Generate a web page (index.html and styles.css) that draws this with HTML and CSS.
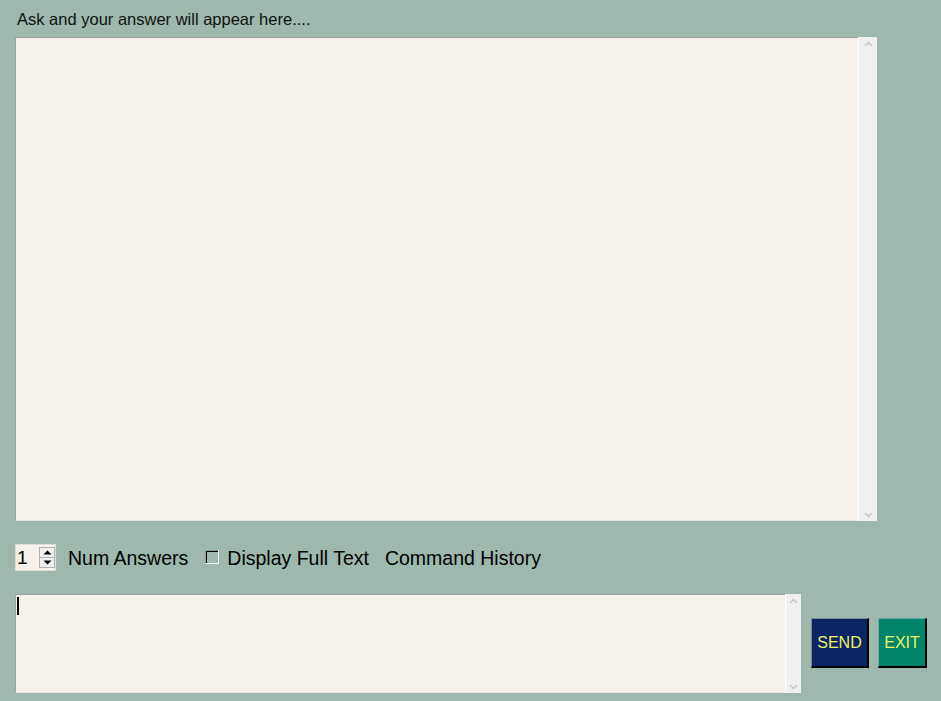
FILE: index.html
```html
<!DOCTYPE html>
<html>
<head>
<meta charset="utf-8">
<link rel="stylesheet" href="styles.css">
</head>
<body>
<div class="app">
  <div class="prompt">Ask and your answer will appear here....</div>
  <div class="answer-box">
    <div class="answer-text"></div>
    <div class="vscroll">
      <span class="arr up"><svg width="9" height="6" viewBox="0 0 9 6"><path d="M0 5 L4.5 0.5 L9 5 L7 5 L4.5 2.5 L2 5Z" fill="#c4c4c4"/></svg></span>
      <span class="arr down"><svg width="9" height="6" viewBox="0 0 9 6"><path d="M0 1 L4.5 5.5 L9 1 L7 1 L4.5 3.5 L2 1Z" fill="#c4c4c4"/></svg></span>
    </div>
  </div>
  <div class="controls">
    <div class="spin">
      <span class="spin-val">1</span>
      <span class="spin-btns">
        <span class="sb"><svg width="9" height="5" viewBox="0 0 9 5"><path d="M0.5 4.5 L4.5 0.5 L8.5 4.5Z" fill="#000"/></svg></span>
        <span class="sb"><svg width="9" height="5" viewBox="0 0 9 5"><path d="M0.5 0.5 L4.5 4.5 L8.5 0.5Z" fill="#000"/></svg></span>
      </span>
    </div>
    <span class="lbl num">Num Answers</span>
    <span class="check"></span>
    <span class="lbl">Display Full Text</span>
    <span class="lbl hist">Command History</span>
  </div>
  <div class="bottom">
    <div class="input-box">
      <div class="input-text"><span class="caret"></span></div>
      <div class="vscroll small">
        <span class="arr up"><svg width="9" height="6" viewBox="0 0 9 6"><path d="M0 5 L4.5 0.5 L9 5 L7 5 L4.5 2.5 L2 5Z" fill="#c4c4c4"/></svg></span>
        <span class="arr down"><svg width="9" height="6" viewBox="0 0 9 6"><path d="M0 1 L4.5 5.5 L9 1 L7 1 L4.5 3.5 L2 1Z" fill="#c4c4c4"/></svg></span>
      </div>
    </div>
    <div class="buttons">
      <button class="btn send">SEND</button>
      <button class="btn exit">EXIT</button>
    </div>
  </div>
</div>
</body>
</html>
```
FILE: styles.css
```css
* { box-sizing: border-box; }
html, body { margin: 0; padding: 0; }
body {
  background: #9eb8ae;
  width: 941px;
  height: 701px;
  overflow: hidden;
  font-family: "Liberation Sans", Arial, sans-serif;
  color: #000;
}
.app {
  padding: 9px 0 0 15px;
}
.prompt {
  font-size: 16.5px;
  line-height: 20px;
  height: 28px;
  padding-left: 2px;
  color: #111;
}
.answer-box {
  display: flex;
  width: 862px;
  height: 484px;
}
.answer-text {
  flex: 1;
  background: #f6f1eb;
  border-top: 1px solid #a0a0a0;
  border-left: 1px solid #a0a0a0;
  border-bottom: 1px solid #e3e3e3;
}
.vscroll {
  width: 19px;
  background: #f0f0f0;
  border-left: 1px solid #ffffff;
  display: flex;
  flex-direction: column;
  justify-content: space-between;
  align-items: center;
  padding: 4px 0 3px;
}
.vscroll .arr { display: block; line-height: 0; }
.vscroll.small { width: 16px; }
.controls {
  display: flex;
  align-items: center;
  height: 43px;
  margin-top: 15px;
}
.spin {
  display: flex;
  width: 41px;
  height: 27px;
  background: #f6f1eb;
  border: 1px solid #e0dcd6;
}
.spin-val {
  flex: 1;
  font-size: 19px;
  line-height: 25px;
  padding-left: 1px;
  color: #000;
}
.spin-btns {
  width: 16px;
  display: flex;
  flex-direction: column;
  padding: 2px 0 2px 0;
}
.sb {
  flex: 1;
  display: flex;
  align-items: center;
  justify-content: center;
  background: #f0f0f0;
  border: 1px solid #b0b0b0;
  line-height: 0;
}
.sb + .sb { border-top: none; }
.lbl {
  font-size: 19.5px;
  line-height: 24px;
  color: #000;
}
.num { margin-left: 12px; }
.check {
  width: 14px;
  height: 14px;
  margin: 0 8px 0 17px;
  border-right: 1px solid #ffffff;
  border-bottom: 1px solid #ffffff;
  border-top: 1px solid #8a9a94;
  border-left: 1px solid #8a9a94;
  box-shadow: inset 1px 1px 0 #000;
  position: relative;
  top: -1px;
}
.hist { margin-left: 16px; }
.bottom {
  display: flex;
  margin-top: 15px;
}
.input-box {
  display: flex;
  width: 786px;
  height: 99px;
}
.input-text {
  flex: 1;
  background: #f6f1eb;
  border-top: 1px solid #a0a0a0;
  border-left: 1px solid #a0a0a0;
  border-bottom: 1px solid #e3e3e3;
  padding: 2px 0 0 1px;
}
.caret {
  display: block;
  width: 2px;
  height: 18px;
  background: #000;
}
.buttons {
  display: flex;
  align-items: flex-start;
  gap: 9px;
  padding-top: 24px;
  margin-left: 10px;
}
.btn {
  font-family: "Liberation Sans", Arial, sans-serif;
  font-size: 16px;
  color: #f2f264;
  height: 50px;
  padding: 0;
  border-top: 1px solid #7a8aa0;
  border-left: 1px solid #7a8aa0;
  border-right: 2px solid #000;
  border-bottom: 2px solid #000;
  cursor: default;
}
.send { width: 58px; background: #0b2464; }
.exit { width: 49px; background: #00846a; border-top-color: #6aa; border-left-color: #6aa; }
```
